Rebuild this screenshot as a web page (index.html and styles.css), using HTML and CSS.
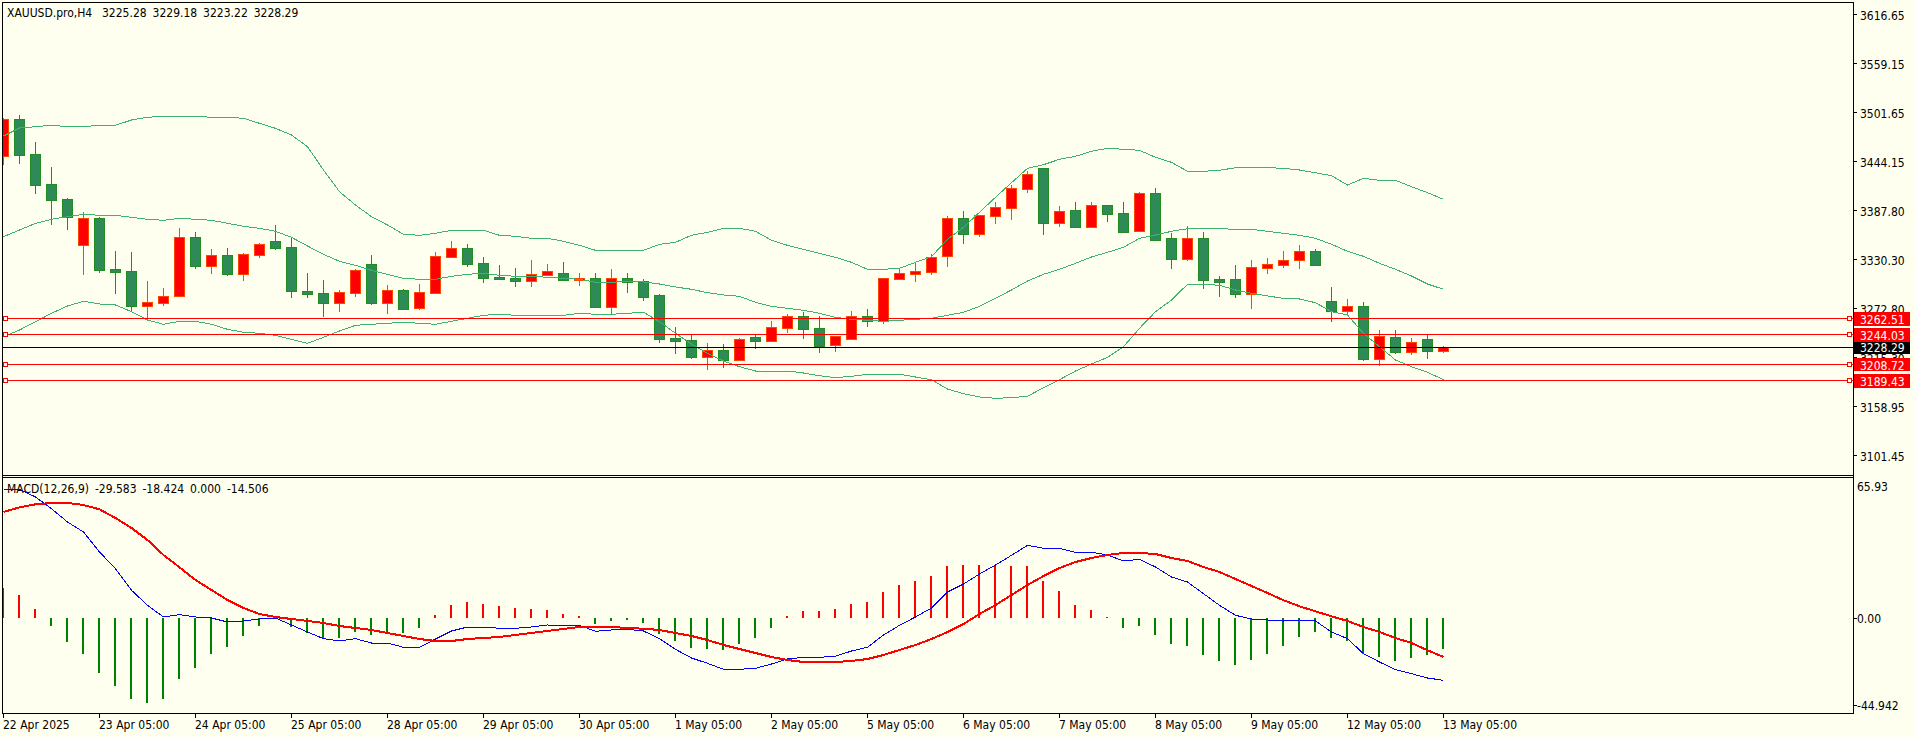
FILE: index.html
```html
<!DOCTYPE html>
<html lang="en">
<head>
    <meta charset="UTF-8">
    <title>XAUUSD.pro,H4</title>
    <link rel="stylesheet" href="styles.css">
</head>
<body>
    <svg id="chart" class="chart" width="1916" height="737" viewBox="0 0 1916 737" xmlns="http://www.w3.org/2000/svg">
        <defs>
            <clipPath id="mainClip"><rect x="3" y="3" width="1850" height="472"></rect></clipPath>
            <clipPath id="macdClip"><rect x="3" y="478" width="1850" height="235"></rect></clipPath>
        </defs>
        <g id="axisLabels"></g>
        <g id="mainPane" clip-path="url(#mainClip)"></g>
        <g id="macdPane" clip-path="url(#macdClip)"></g>
        <g id="frame"></g>
        <g id="priceTags"></g>
    </svg>
    <script src="chart.js"></script>
</body>
</html>
```

FILE: styles.css
```css
* {
    margin: 0;
    padding: 0;
    box-sizing: border-box;
}

html, body {
    width: 1916px;
    height: 737px;
    overflow: hidden;
    background-color: #fffff0;
}

.chart {
    display: block;
    font-family: "DejaVu Sans", "Liberation Sans", sans-serif;
    font-stretch: condensed;
    font-size: 12px;
}

.chart rect, .chart polyline {
    shape-rendering: crispEdges;
}

.label {
    fill: #000000;
}

.readout {
    word-spacing: 2.5px;
}

.tag-text {
    fill: #ffffff;
}

.frame-line {
    fill: #000000;
}

.level {
    fill: #ff0000;
}

.level-handle {
    fill: #fffff0;
    stroke: #ff0000;
    stroke-width: 1;
}

.body-up {
    fill: #ff0000;
    stroke: #ff4500;
    stroke-width: 1;
}

.body-down {
    fill: #2e8b57;
    stroke: #228b22;
    stroke-width: 1;
}

.wick-up {
    fill: #ff4500;
}

.wick-down {
    fill: #228b22;
}

.band {
    fill: none;
    stroke: #3cb371;
    stroke-width: 1;
}

.macd-line {
    fill: none;
    stroke: #0000ff;
    stroke-width: 1;
}

.signal-line {
    fill: none;
    stroke: #ff0000;
    stroke-width: 2;
}

.hist-up {
    fill: #ff0000;
}

.hist-down {
    fill: #008000;
}
```

FILE: chart.js
```js
// all series are in 1/3 pixel steps, measured off the terminal screenshot
const NS = 'http://www.w3.org/2000/svg';
const MACD_TOP = 1101; // 367 * 3, the macd series were read from y = 367 down
const ZERO = 753;

// colour, high, body top, body bottom, low
const bars = [
    ['r',355,357,467,494],['g',346,357,464,492],['g',427,462,554,582],['g',501,552,600,675],
    ['g',594,597,650,690],['r',636,654,735,825],['g',652,654,810,819],['g',753,807,816,882],
    ['g',756,813,918,933],['r',843,906,918,960],['r',864,888,909,918],['r',684,711,888,888],
    ['g',696,711,798,807],['r',747,765,798,822],['g',744,765,822,828],['r',759,762,822,843],
    ['r',729,732,765,774],['g',675,723,744,750],['g',714,741,873,894],['g',819,873,882,894],
    ['g',840,879,909,951],['r',870,876,909,936],['r',807,810,879,891],['g',765,792,909,915],
    ['r',855,870,909,942],['g',867,870,927,927],['r',852,876,924,930],['r',756,768,879,879],
    ['r',723,744,771,774],['g',732,744,792,801],['g',771,789,834,849],['g',795,831,837,837],
    ['g',804,834,843,861],['r',780,822,843,861],['r',792,813,825,825],['g',786,819,840,840],
    ['r',819,834,840,858],['g',819,834,921,924],['r',807,834,921,943],['g',819,834,846,879],
    ['g',837,843,891,903],['g',882,885,1017,1029],['g',981,1014,1023,1062],['g',1005,1020,1071,1077],
    ['r',1029,1050,1071,1110],['g',1032,1050,1080,1104],['r',1014,1017,1080,1083],['g',1005,1011,1023,1047],
    ['r',963,981,1023,1023],['r',942,948,984,999],['g',936,948,987,1017],['g',949,984,1038,1059],
    ['r',1008,1008,1035,1056],['r',933,948,1017,1020],['g',927,948,963,981],['r',834,834,963,972],
    ['r',804,819,837,840],['r',786,813,822,846],['r',762,771,816,825],['r',648,654,768,801],
    ['g',633,654,702,732],['r',645,645,702,711],['r',606,621,648,672],['r',555,564,624,660],
    ['r',513,522,567,579],['g',504,504,669,705],['r',618,633,669,681],['g',606,630,681,681],
    ['r',606,615,681,684],['g',615,615,642,666],['g',606,639,696,696],['r',576,579,693,696],
    ['g',564,579,720,720],['g',699,714,777,807],['r',678,714,777,783],['g',696,714,840,867],
    ['g',828,837,846,891],['g',795,837,882,894],['r',780,801,882,927],['r',774,792,804,822],
    ['r',753,780,795,804],['r',735,753,780,807],['g',747,753,795,798],['g',861,903,933,966],
    ['r',897,918,933,942],['g',906,918,1077,1083],['r',990,1008,1077,1098],['g',990,1011,1056,1062],
    ['r',1014,1026,1056,1065],['g',1005,1017,1053,1077],['r',1038,1041,1053,1059]
];

const bandUpper = [408,384,380,376,380,380,376,376,360,352,349,349,349,352,352,355,370,385,405,440,510,575,615,650,675,703,706,700,691,691,691,706,709,715,715,724,736,751,751,751,751,733,727,706,697,685,685,694,721,736,748,760,772,787,808,808,805,787,770,718,682,637,592,548,505,494,478,469,454,445,448,451,472,487,514,514,511,503,503,503,505,510,518,527,555,535,541,541,560,578,598];
const bandMiddle = [710,690,670,658,650,643,646,646,652,658,661,655,658,661,670,679,685,694,712,738,763,784,796,811,823,835,838,838,829,823,820,826,829,829,832,835,838,847,847,844,846,852,861,868,878,885,889,907,919,925,931,940,952,958,961,964,961,958,955,946,937,919,895,870,843,823,808,790,771,757,742,715,705,694,686,686,686,688,688,694,700,706,715,733,754,769,790,808,828,852,868];
const bandLower = [1010,990,965,940,918,904,912,915,935,960,973,964,964,973,988,997,1000,1006,1018,1030,1012,993,976,973,970,967,970,973,964,955,946,943,946,946,946,946,940,943,943,940,937,965,1000,1032,1060,1083,1100,1113,1113,1113,1119,1127,1133,1129,1123,1123,1123,1131,1139,1167,1181,1191,1195,1193,1189,1163,1139,1113,1092,1072,1040,985,935,900,853,853,856,870,880,888,895,897,908,935,945,1000,1040,1080,1100,1117,1139];

const histogram = [663,684,726,777,825,861,918,957,996,1008,996,936,903,861,840,807,777,756,780,798,813,813,795,804,798,798,783,744,714,705,711,717,723,726,729,741,747,771,762,759,768,801,822,843,846,849,831,813,783,747,732,732,726,711,705,675,654,642,627,597,594,594,597,597,597,642,672,714,729,750,783,777,804,831,837,864,882,894,879,861,837,810,795,813,822,861,870,882,873,864,846];
const signal = [435,421,412,408,408,414,427,453,483,519,564,601,639,669,699,723,741,750,756,762,768,777,783,789,798,807,816,822,822,816,813,810,804,798,792,786,780,780,780,783,785,789,798,807,819,834,846,858,870,879,885,885,885,882,876,864,849,834,816,795,771,741,714,684,654,627,603,585,573,564,558,558,561,573,582,600,615,636,657,678,700,718,733,748,762,780,795,813,828,850,870];
const macd = [367,367,390,425,465,495,555,605,670,715,750,743,750,753,765,762,756,753,774,795,815,822,815,828,828,841,841,816,792,780,780,784,784,780,774,777,775,793,789,787,792,815,847,873,889,907,907,904,891,876,871,871,868,852,841,804,775,750,723,675,651,621,594,565,535,544,544,556,556,564,582,577,600,630,645,680,715,745,756,759,762,759,762,795,815,860,885,908,920,933,940];

const priceTicks = [
    ['3616.65', 15], ['3559.15', 64], ['3501.65', 113], ['3444.15', 162], ['3387.80', 211],
    ['3330.30', 260], ['3272.80', 309], ['3215.30', 358], ['3158.95', 407], ['3101.45', 456]
];
const dates = [
    '22 Apr 2025', '23 Apr 05:00', '24 Apr 05:00', '25 Apr 05:00', '28 Apr 05:00', '29 Apr 05:00',
    '30 Apr 05:00', '1 May 05:00', '2 May 05:00', '5 May 05:00', '6 May 05:00', '7 May 05:00',
    '8 May 05:00', '9 May 05:00', '12 May 05:00', '13 May 05:00'
];
const levels = [
    ['3262.51', 318, 312, 14], ['3244.03', 334, 328, 14], ['3208.72', 364, 358, 13], ['3189.43', 380, 374, 14]
];

function barX(i) {
    return 3 + 16 * i;
}

function px(v) {
    return Math.round(v / 3);
}

function el(parent, name, attrs, text) {
    const node = document.createElementNS(NS, name);
    for (const key in attrs) node.setAttribute(key, attrs[key]);
    if (text) node.textContent = text;
    parent.appendChild(node);
    return node;
}

function rect(parent, x, y, width, height, cls) {
    return el(parent, 'rect', { x: x, y: y, width: width, height: height, class: cls });
}

function line(parent, series, cls, offset) {
    const points = series.map((v, i) => (barX(i) + 0.5) + ',' + ((v + offset) / 3).toFixed(1)).join(' ');
    el(parent, 'polyline', { points: points, class: cls });
}

const mainPane = document.getElementById('mainPane');
const macdPane = document.getElementById('macdPane');
const frame = document.getElementById('frame');
const axisLabels = document.getElementById('axisLabels');
const priceTags = document.getElementById('priceTags');

bars.forEach((b, i) => {
    const x = barX(i);
    const kind = b[0] === 'r' ? 'up' : 'down';
    rect(mainPane, x, px(b[1]), 1, Math.max(px(b[4]) - px(b[1]), 1), 'wick-' + kind);
    rect(mainPane, x - 4.5, px(b[2]) + 0.5, 10, Math.max(px(b[3]) - px(b[2]), 1), 'body-' + kind);
});

line(mainPane, bandUpper, 'band', 0);
line(mainPane, bandMiddle, 'band', 0);
line(mainPane, bandLower, 'band', 0);

levels.forEach(l => {
    rect(mainPane, 3, l[1], 1850, 1, 'level');
    el(frame, 'rect', { x: 3.5, y: l[1] - 1.5, width: 4, height: 4, class: 'level-handle' });
    el(frame, 'rect', { x: 1847.5, y: l[1] - 1.5, width: 4, height: 4, class: 'level-handle' });
});
rect(mainPane, 3, 347, 1850, 1, 'frame-line');

histogram.forEach((v, i) => {
    const x = barX(i) - 1;
    if (v < ZERO) rect(macdPane, x, MACD_TOP / 3 + px(v), 2, px(ZERO) - px(v), 'hist-up');
    else rect(macdPane, x, MACD_TOP / 3 + px(ZERO), 2, px(v) - px(ZERO), 'hist-down');
});
line(macdPane, macd, 'macd-line', MACD_TOP);
line(macdPane, signal, 'signal-line', MACD_TOP);

// frame of the two panes
rect(frame, 2, 2, 1852, 1, 'frame-line');
rect(frame, 2, 475, 1852, 1, 'frame-line');
rect(frame, 2, 477, 1852, 1, 'frame-line');
rect(frame, 2, 713, 1852, 1, 'frame-line');
rect(frame, 2, 2, 1, 712, 'frame-line');
rect(frame, 1853, 2, 1, 712, 'frame-line');

priceTicks.forEach(t => {
    rect(frame, 1854, t[1] - 1, 3, 1, 'frame-line');
    el(axisLabels, 'text', { x: 1860, y: t[1] + 5, class: 'label' }, t[0]);
});

[['65.93', 491, false], ['0.00', 623, true], ['-44.942', 710, true]].forEach(t => {
    if (t[2]) rect(frame, 1854, t[1] - 5, 3, 1, 'frame-line');
    el(axisLabels, 'text', { x: 1857, y: t[1], class: 'label' }, t[0]);
});

dates.forEach((d, i) => {
    const x = 3 + 96 * i;
    rect(frame, x, 714, 1, 4, 'frame-line');
    el(axisLabels, 'text', { x: x, y: 729, class: 'label' }, d);
});

el(axisLabels, 'text', { x: 7, y: 17, class: 'label' }, 'XAUUSD.pro,H4');
el(axisLabels, 'text', { x: 102, y: 17, class: 'label readout' }, '3225.28 3229.18 3223.22 3228.29');
el(axisLabels, 'text', { x: 7, y: 493, class: 'label readout' }, 'MACD(12,26,9) -29.583 -18.424 0.000 -14.506');

levels.forEach(l => {
    rect(priceTags, 1854, l[2], 56, l[3], 'level');
    el(priceTags, 'text', { x: 1860, y: l[1] + 6, class: 'tag-text' }, l[0]);
});
rect(priceTags, 1854, 342, 56, 12, 'frame-line');
el(priceTags, 'text', { x: 1860, y: 352, class: 'tag-text' }, '3228.29');
```
